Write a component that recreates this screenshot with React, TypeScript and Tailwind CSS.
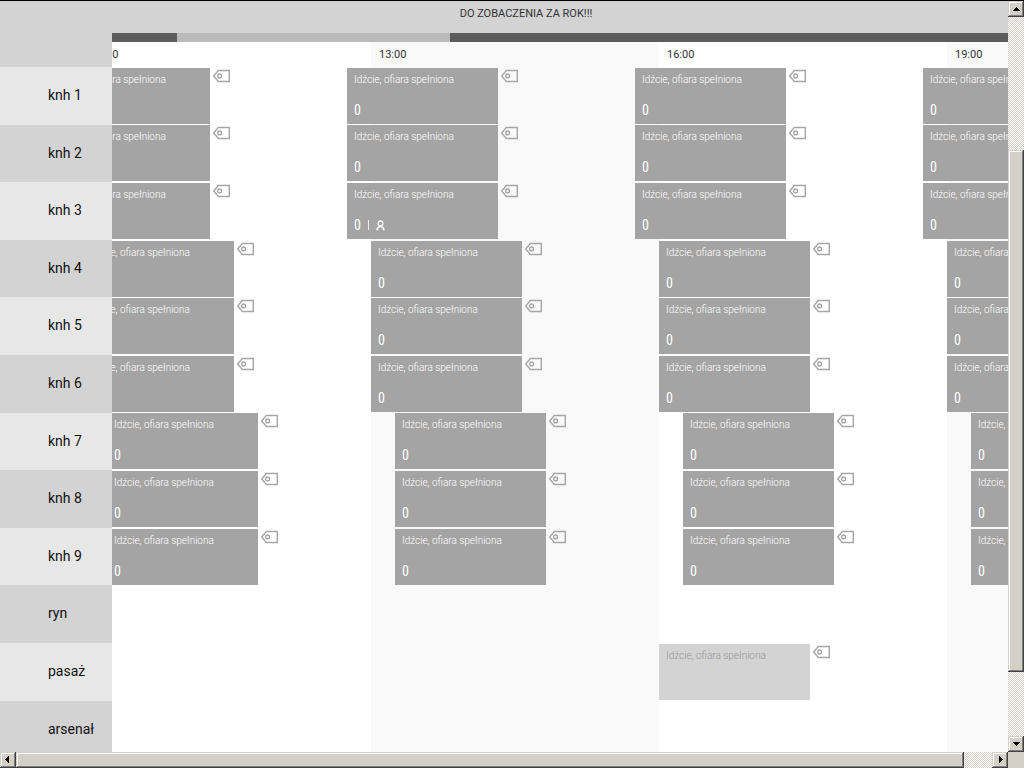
import { clsx } from 'clsx'

interface Slot {
  count?: number
  guest?: boolean
  faded?: boolean
}

interface Room {
  name: string
  shift: string
  slots: (Slot | null)[]
}

// Lanes start before the visible area, the shift moves the first slot left
const EARLY = '-ml-[53px]'
const MIDDLE = '-ml-[29px]'
const LATE = '-ml-[5px]'

const full: Slot[] = [{ count: 0 }, { count: 0 }, { count: 0 }, { count: 0 }]

const rooms: Room[] = [
  { name: 'knh 1', shift: EARLY, slots: full },
  { name: 'knh 2', shift: EARLY, slots: full },
  {
    name: 'knh 3',
    shift: EARLY,
    slots: [{ count: 0 }, { count: 0, guest: true }, { count: 0 }, { count: 0 }],
  },
  { name: 'knh 4', shift: MIDDLE, slots: full },
  { name: 'knh 5', shift: MIDDLE, slots: full },
  { name: 'knh 6', shift: MIDDLE, slots: full },
  { name: 'knh 7', shift: LATE, slots: full },
  { name: 'knh 8', shift: LATE, slots: full },
  { name: 'knh 9', shift: LATE, slots: full },
  { name: 'ryn', shift: MIDDLE, slots: [] },
  { name: 'pasaż', shift: MIDDLE, slots: [null, null, { faded: true }] },
  { name: 'arsenał', shift: MIDDLE, slots: [] },
]

const hours = ['10:00', '13:00', '16:00', '19:00']

const LANE =
  'min-w-0 flex-1 overflow-hidden bg-[repeating-linear-gradient(90deg,#ffffff_0_288px,#f9f9f9_288px_576px)] bg-[position:-29px_0] bg-[size:2880px_100%]'

const RAISED =
  'bg-[#d4d0c8] shadow-[inset_-1px_-1px_0_#404040,inset_1px_1px_0_#d4d0c8,inset_-2px_-2px_0_#808080,inset_2px_2px_0_#ffffff]'

const TRACK = 'bg-[repeating-conic-gradient(#ffffff_0_25%,#d4d0c8_0_50%)] bg-[size:2px_2px]'

function TagIcon() {
  return (
    <svg width="18" height="14" viewBox="0 0 18 14" fill="none" stroke="#a6a6a6" className="shrink-0">
      <path d="M6.3 1.5H17.3V12.5H6.3L1.7 7Z" strokeWidth="1.4" />
      <circle cx="7.6" cy="6.9" r="1.9" strokeWidth="1.4" />
    </svg>
  )
}

function GuestIcon() {
  return (
    <svg width="9" height="11" viewBox="0 0 9 11" fill="none" stroke="#ffffff" strokeWidth="1.3">
      <circle cx="4.5" cy="3.4" r="2.4" />
      <path d="M3.2 5.4L4.5 6.3L5.8 5.4M4.5 6.3C2.6 6.6 1.4 7.6 1 9.6H2.4M4.5 6.3C6.4 6.6 7.6 7.6 8 9.6H6.6" />
    </svg>
  )
}

function SlotCard({ slot }: { slot: Slot }) {
  return (
    <>
      <div
        className={clsx(
          'flex h-14 w-[151px] shrink-0 flex-col justify-between px-[7px] pt-1 pb-1',
          slot.faded ? 'bg-[#d3d3d3] text-[#999999]' : 'bg-[#a4a4a4] text-white'
        )}
      >
        <p className="text-[10px] leading-4 font-light whitespace-nowrap">Idźcie, ofiara spełniona</p>
        {slot.count !== undefined && (
          <p className="flex items-center gap-[7px] font-['Roboto_Condensed',Roboto,sans-serif] text-[14px] leading-5">
            {slot.count}
            {slot.guest && (
              <>
                <span className="h-2.5 w-px bg-white/80" />
                <GuestIcon />
              </>
            )}
          </p>
        )}
      </div>
      <div className="pt-px pl-0.5">
        <TagIcon />
      </div>
    </>
  )
}

function RoomRow({ room }: { room: Room }) {
  return (
    <div className="group flex h-[58px] shrink-0 nth-[5n+2]:h-[57px] nth-[5n+4]:h-[57px]">
      <h2 className="flex w-28 shrink-0 items-center bg-[#d3d3d3] pb-0.5 pl-12 text-sm text-[#111111] group-odd:bg-[#e7e7e7]">
        {room.name}
      </h2>
      <div className={LANE}>
        <div className={clsx('flex h-full items-end pb-px group-nth-[5n+4]:pb-0', room.shift)}>
          {room.slots.map((slot, i) => (
            <div key={i} className="flex w-72 shrink-0">
              {slot && <SlotCard slot={slot} />}
            </div>
          ))}
        </div>
      </div>
    </div>
  )
}

function ArrowButton({ label, d }: { label: string; d: string }) {
  return (
    <button aria-label={label} className={clsx('flex size-4 shrink-0 items-center justify-center', RAISED)}>
      <svg width="8" height="8" viewBox="0 0 8 8" fill="#000000" shapeRendering="crispEdges">
        <path d={d} />
      </svg>
    </button>
  )
}

export default function App() {
  return (
    <div className="flex h-screen flex-col overflow-hidden border-t border-black bg-white font-[Roboto,sans-serif]">
      <div className="flex min-h-0 flex-1">
        <main className="flex min-w-0 flex-1 flex-col overflow-hidden">
          <header className="shrink-0 bg-[#d3d3d3]">
            <h1 className="h-8 pt-[5px] pl-11 text-center text-[11px] leading-4 text-[#333333]">
              DO ZOBACZENIA ZA ROK!!!
            </h1>
            <div className="ml-28 flex h-[9px] bg-[#5c5c5c]">
              <div className="ml-[65px] w-[273px] bg-[#bababa]" />
            </div>
            <div className="flex h-[25px] pl-28">
              <div className={LANE}>
                <div className="-ml-[29px] flex h-full items-center">
                  {hours.map((hour) => (
                    <time key={hour} className="w-72 shrink-0 pl-2 text-[11px] leading-4 text-[#333333]">
                      {hour}
                    </time>
                  ))}
                </div>
              </div>
            </div>
          </header>
          <section>
            {rooms.map((room) => (
              <RoomRow key={room.name} room={room} />
            ))}
          </section>
        </main>

        {/* Vertical scrollbar */}
        <div className={clsx('flex w-4 shrink-0 flex-col', TRACK)}>
          <ArrowButton label="Przewiń w górę" d="M4 2H5V3H6V4H7V5H8V6H1V5H2V4H3V3H4Z" />
          <div className="flex-[133]" />
          <div className={clsx('flex-[522]', RAISED)} />
          <div className="flex-[64]" />
          <ArrowButton label="Przewiń w dół" d="M1 2H8V3H7V4H6V5H5V6H4V5H3V4H2V3H1Z" />
        </div>
      </div>

      {/* Horizontal scrollbar */}
      <div className="flex h-4 shrink-0 bg-[#d4d0c8]">
        <div className={clsx('flex flex-1', TRACK)}>
          <ArrowButton label="Przewiń w lewo" d="M5 0V7H4V6H3V5H2V4H1V3H2V2H3V1H4V0Z" />
          <div className={clsx('flex-[948]', RAISED)} />
          <div className="flex-[28]" />
          <ArrowButton label="Przewiń w prawo" d="M3 0V7H4V6H5V5H6V4H7V3H6V2H5V1H4V0Z" />
        </div>
        <div className="w-4 shrink-0" />
      </div>
    </div>
  )
}
